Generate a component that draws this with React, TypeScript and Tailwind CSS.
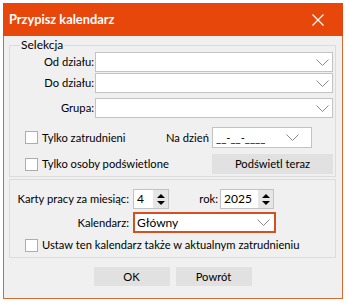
import React from "react";

const Chevron = ({ className = "" }: { className?: string }) => (
  <svg width="13" height="7" viewBox="0 0 13 7" className={className}>
    <path d="M0.5 0.5 L6.5 6.5 L12.5 0.5" fill="none" stroke="#8a8a8a" strokeWidth="1" />
  </svg>
);

const Combo = ({ value = "", className = "" }: { value?: string; className?: string }) => (
  <div className={`flex items-center justify-between bg-white border border-[#c3c3c3] pl-[3px] pr-[3px] ${className}`}>
    <span>{value}</span>
    <Chevron />
  </div>
);

const Check = () => <div className="w-[13px] h-[13px] bg-white border border-[#adadad] shrink-0" />;

const Spin = ({ value, w }: { value: string; w: string }) => (
  <div className={`flex items-stretch h-[20px] bg-white border border-[#c3c3c3] ${w}`}>
    <span className="flex-1 pl-[3px] leading-[18px] text-[12px]">{value}</span>
    <div className="w-[15px] bg-[#e6e6e6] flex flex-col items-center justify-center gap-[3px]">
      <svg width="8" height="4" viewBox="0 0 8 4"><path d="M0 4 L4 0 L8 4 Z" fill="#000" /></svg>
      <svg width="8" height="4" viewBox="0 0 8 4"><path d="M0 0 L4 4 L8 0 Z" fill="#000" /></svg>
    </div>
  </div>
);

export default function App() {
  return (
    <div
      className="w-[348px] h-[304px] bg-white pt-[3px] pl-[3px] text-[11.2px] text-black whitespace-nowrap"
      style={{ fontFamily: 'Lato, "Liberation Sans", sans-serif' }}
    >
      <div className="w-[340px] h-[296px] flex flex-col">
        <div className="h-[33px] bg-[#e8470c] flex items-center justify-between pl-[6px] pr-[19px] shrink-0">
          <span className="text-white font-bold text-[12.8px]">Przypisz kalendarz</span>
          <svg width="12" height="12" viewBox="0 0 12 12">
            <path d="M0.5 0.5 L11.5 11.5 M11.5 0.5 L0.5 11.5" stroke="#fff" strokeWidth="1.2" />
          </svg>
        </div>
        <div className="flex-1 bg-[#f0f0f0] border border-t-0 border-[#d56a35] pl-[5px] pr-[6px] pt-[2px] leading-[14px]">
          <fieldset className="border border-[#dcdcdc] pr-[2px] pb-[2px]">
            <legend className="ml-[10px] px-[1px] leading-[14px] text-[12px]">Selekcja</legend>
            <div className="flex flex-col">
              <div className="flex items-center">
                <span className="w-[85px] text-right pr-[1px]">Od działu:</span>
                <Combo className="flex-1 h-[20px]" />
              </div>
              <div className="flex items-center mt-[1px]">
                <span className="w-[85px] text-right pr-[1px]">Do działu:</span>
                <Combo className="flex-1 h-[20px]" />
              </div>
              <div className="flex items-center mt-[5px]">
                <span className="w-[85px] text-right pr-[1px]">Grupa:</span>
                <Combo className="flex-1 h-[20px]" />
              </div>
              <div className="flex items-center h-[21px] mt-[9px]">
                <div className="w-[156px] flex items-center pl-[15px] gap-[4px]">
                  <Check />
                  <span>Tylko zatrudnieni</span>
                </div>
                <span className="w-[46px]">Na dzień</span>
                <div className="w-[100px] h-[21px] bg-white border border-[#c3c3c3] flex items-center justify-between pl-[3px] pr-[12px]">
                  <span>__-__-____</span>
                  <Chevron />
                </div>
              </div>
              <div className="flex items-center h-[20px] mt-[6px]">
                <div className="w-[202px] flex items-center pl-[15px] gap-[4px]">
                  <Check />
                  <span>Tylko osoby podświetlone</span>
                </div>
                <div className="w-[121px] h-[20px] bg-[#e1e1e1] flex items-center justify-center">Podświetl teraz</div>
              </div>
            </div>
          </fieldset>
          <fieldset className="border border-[#dcdcdc] mt-[2px] pt-[9px] pb-[5px]">
            <div className="flex items-center">
              <span className="w-[123px] text-right pr-[4px]">Karty pracy za miesiąc:</span>
              <Spin value="4" w="w-[36px]" />
              <span className="w-[51px] text-right pr-[2px]">rok:</span>
              <Spin value="2025" w="w-[54px]" />
            </div>
            <div className="flex items-center mt-[3px]">
              <span className="w-[123px] text-right pr-[4px]">Kalendarz:</span>
              <div className="w-[143px] h-[21px] bg-white border-2 border-[#d4501f] flex items-center justify-between pl-[2px] pr-[4px]">
                <span className="text-[12px]">Główny</span>
                <Chevron />
              </div>
            </div>
            <div className="flex items-center mt-[5px] pl-[15px] gap-[4px] h-[14px]">
              <Check />
              <span>Ustaw ten kalendarz także w aktualnym zatrudnieniu</span>
            </div>
          </fieldset>
          <div className="flex justify-center gap-[6px] mt-[9px]">
            <div className="w-[76px] h-[19px] bg-[#e1e1e1] flex items-center justify-center">OK</div>
            <div className="w-[76px] h-[19px] bg-[#e1e1e1] flex items-center justify-center">Powrót</div>
          </div>
        </div>
      </div>
    </div>
  );
}
